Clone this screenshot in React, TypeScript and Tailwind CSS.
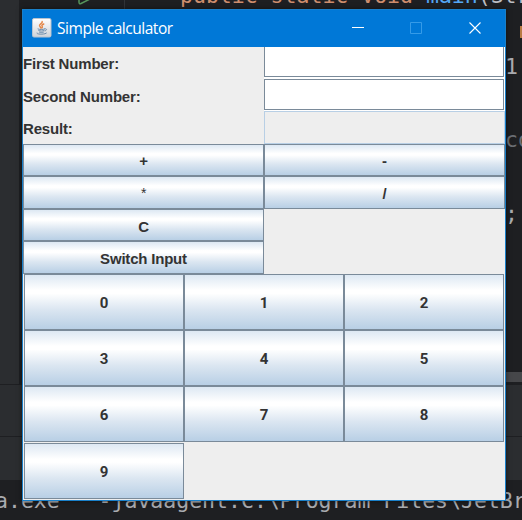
import type { ReactNode } from 'react';

function Key({ label, className = '' }: { label: string; className?: string }) {
  return (
    <button
      type="button"
      className={`flex items-center justify-center border border-[#7a8a99] bg-[linear-gradient(to_bottom,#dde8f3_0%,#ffffff_28%,#ffffff_34%,#dbe6f1_64%,#b8cfe5_100%)] leading-none text-[#333333] ${className}`}
    >
      {label}
    </button>
  );
}

function Label({ children, className = '' }: { children: ReactNode; className?: string }) {
  return (
    <label className={`flex w-[241px] items-center text-[15px] leading-none font-bold tracking-[-0.18px] text-[#333333] ${className}`}>
      {children}
    </label>
  );
}

function JavaIcon() {
  return (
    <svg width="20" height="20" viewBox="0 0 20 20" className="mb-px ml-[9px]">
      <defs>
        <linearGradient id="tile" x1="0" y1="0" x2="0" y2="1">
          <stop offset="0" stopColor="#ffffff" />
          <stop offset="1" stopColor="#cfd3d8" />
        </linearGradient>
      </defs>
      <rect x="0.5" y="0.5" width="18.5" height="18.5" rx="1.5" fill="url(#tile)" stroke="#b9c4d0" />
      <g fill="none" strokeLinecap="round">
        <path d="M10.2 3.5c.8 1.800-3 2.300-2.700 4.200.2.900 1.200 1.200 1.300 2.300M11.800 6c-1.700.6-2.500 1.400-1.600 2.400.5.6 0 1.200-.4 1.500" stroke="#e48545" strokeWidth="1.4" />
        <path d="M6 11c1.500.7 5 .7 6.500 0M6.800 12.600c1.500.6 3.800.6 5.200 0M7.500 14.200c1.200.4 2.800.4 3.900 0M12.800 10.800c2.300-.5 2.300 1.600.2 2.100M4.800 15c-1.300 1.500 8.500 1.700 9.700.1" stroke="#6c8cac" strokeWidth="1" />
      </g>
    </svg>
  );
}

function Editor() {
  return (
    <div className="absolute inset-0 font-['DejaVu_Sans_Mono',monospace] text-[21.500px] leading-[24px] whitespace-pre text-[#a9abb0]">
      <div className="absolute top-0 left-0 h-full w-[19px] bg-[#2b2d30]" />
      <div className="absolute top-0 left-[124px] h-[9px] w-px bg-[#313438]" />
      <div className="absolute top-[372px] right-0 h-[10px] w-[17px] bg-[#46474a]" />
      <div className="absolute top-[384px] left-0 h-[96px] w-full border-t border-[#1e1f22] bg-[#2b2d30]" />
      <div className="absolute top-[436px] left-0 h-px w-full bg-[#1e1f22]" />
      <div className="absolute top-[480px] left-0 h-[40px] w-full bg-[#1e1f22]" />
      <svg width="20" height="10" viewBox="0 0 20 10" className="absolute top-0 left-[74px]">
        <path d="M5 -6V2Q5 4.500 7 3.500L16 -1" fill="none" stroke="#57965c" strokeWidth="1.500" />
      </svg>
      <div className="absolute top-[-16px] left-[180px] text-[#cf8e6d]">
        public static void <span className="text-[#56a8f5]">main</span>
        <span className="text-[#bcbec4]">(Str</span>
      </div>
      <div className="absolute top-[26px] left-[520px] h-[12px] w-[2px] bg-[#b87a43]" />
      <div className="absolute top-[55px] left-[505px]">1</div>
      <div className="absolute top-[128px] left-[505px] text-[#6b6e74]">co</div>
      <div className="absolute top-[202px] left-[505px]">;</div>
      <div className="absolute top-[489px] left-[-5px]">{'a.exe   -javaagent:C:\\Program Files\\JetBr'}</div>
    </div>
  );
}

export default function App() {
  return (
    <div className="relative h-[520px] w-[522px] overflow-hidden bg-[#1e1f22]">
      <Editor />
      <main className="absolute top-[9px] left-[22px] flex h-[492px] w-[484px] flex-col border border-[#197fc9] bg-[#eeeeee] font-['Liberation_Sans',Arial,sans-serif] shadow-[0_0_5px_rgba(0,0,0,0.5)]">
        <header className="flex h-[37px] shrink-0 items-center bg-[#0078d7] text-white">
          <JavaIcon />
          <h1 className="ml-[5px] flex-1 pt-px font-['Open_Sans',sans-serif] text-[15.500px] leading-none tracking-[-0.46px]">Simple calculator</h1>
          <svg width="154" height="37" viewBox="0 0 154 37" fill="none">
            <path d="M1 17.500h12" stroke="white" />
            <path d="M59.500 12.500h11v11h-11z" stroke="#359be8" />
            <path d="M118.500 12.500l11 11M129.500 12.500l-11 11" stroke="white" strokeWidth="1.1" />
          </svg>
        </header>

        <section className="flex flex-col">
          <div className="flex h-[32px]">
            <Label>First Number:</Label>
            <div className="flex-1 bg-white pr-px pb-[2px]">
              <div className="h-full border-r border-b border-l border-[#7a8a99]" />
            </div>
          </div>
          <div className="flex h-[32px]">
            <Label className="pt-[3px]">Second Number:</Label>
            <div className="flex-1 bg-white pr-px pb-px">
              <div className="h-full border border-[#7a8a99]" />
            </div>
          </div>
          <div className="flex h-[33px]">
            <Label className="pt-px">Result:</Label>
            <div className="flex-1 border border-[#b8cfe5] bg-[#eeeeee]" />
          </div>
        </section>

        <section className="grid grid-cols-[241px_241px] grid-rows-[32px_33px_32px_33px] text-[15px] font-bold tracking-[-0.2px]">
          <Key label="+" className="pt-px" />
          <Key label="-" className="pt-px" />
          <Key label="*" className="text-[14px] font-normal" />
          <Key label="/" className="pt-px" />
          <Key label="C" className="pt-[3px]" />
          <Key label="Switch Input" className="col-start-1 row-start-4 pt-px" />
        </section>

        <section className="grid grid-cols-[160px_160px_160px] grid-rows-[56px_56px_56px_57px] px-px font-['Roboto',sans-serif] text-[15px] font-bold">
          {['0', '1', '2', '3', '4', '5', '6', '7', '8', '9'].map((n) => (
            <Key key={n} label={n} className="pt-[2px] last:mt-px" />
          ))}
        </section>
      </main>
    </div>
  );
}
